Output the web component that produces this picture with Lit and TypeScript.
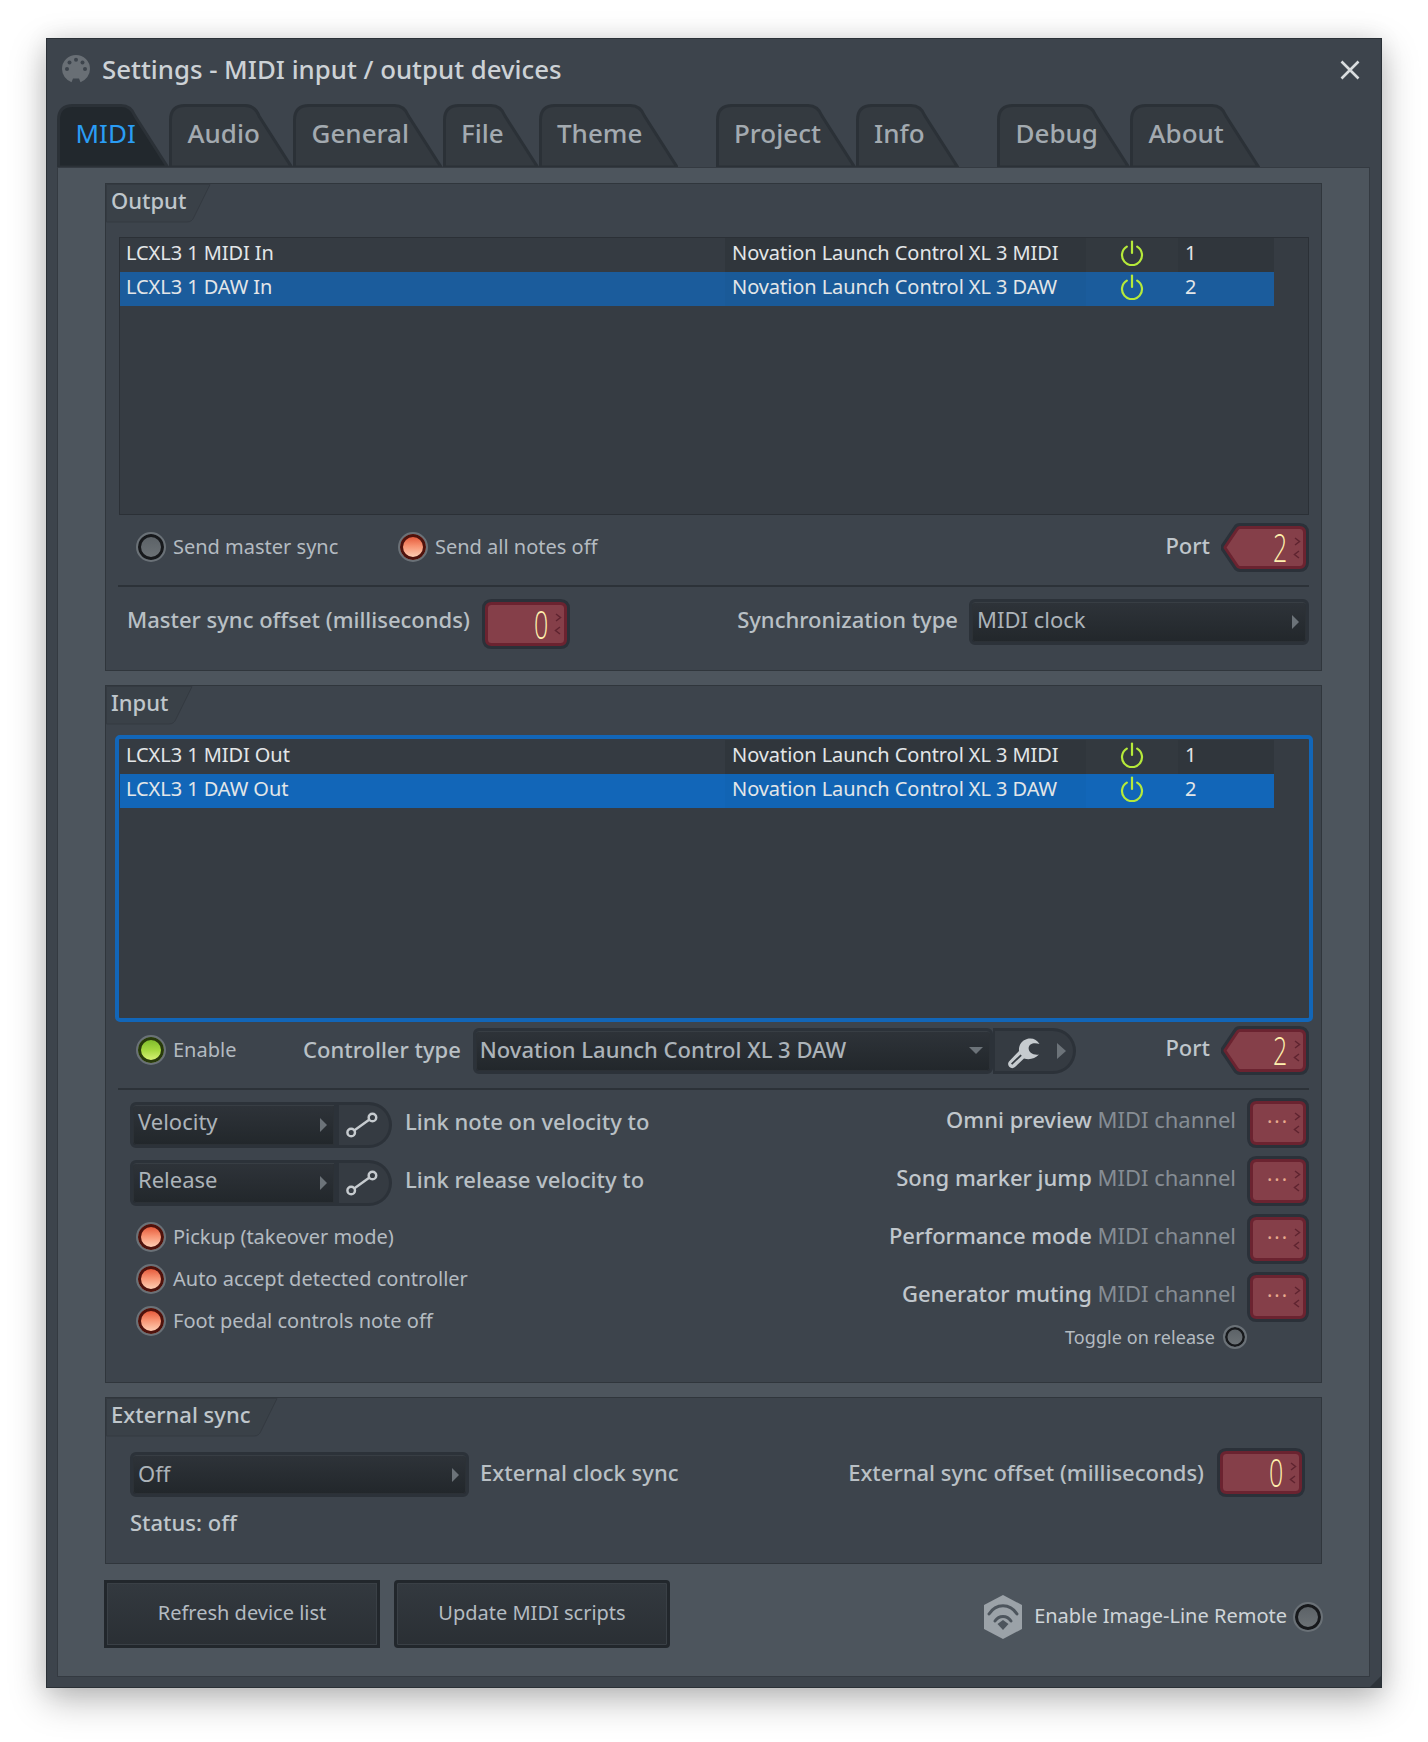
import { LitElement, html, css, svg } from "lit";
import { customElement } from "lit/decorators.js";

const tabPath = (w: number, h: number) =>
  `M1.5 ${h} V16 Q1.5 1.5 16 1.5 H${w - 48} Q${w - 38} 1.5 ${w - 34} 12 L${w - 1.5} ${h} Z`;

const groupPath = (w: number, h: number) =>
  `M0.5 0.5 H${w - 1} L${w - 17} ${h - 6} Q${w - 19} ${h - 1} ${w - 24} ${h - 1} H0.5 Z`;

function knobPath(w: number, h: number, pointed: boolean) {
  const i = 4.5;
  const r = 5;
  if (!pointed) {
    return `M${i + r} ${i} H${w - i - r} Q${w - i} ${i} ${w - i} ${i + r} V${h - i - r} Q${w - i} ${h - i} ${w - i - r} ${h - i} H${i + r} Q${i} ${h - i} ${i} ${h - i - r} V${i + r} Q${i} ${i} ${i + r} ${i} Z`;
  }
  const mid = h / 2;
  return `M19 ${i} H${w - i - r} Q${w - i} ${i} ${w - i} ${i + r} V${h - i - r} Q${w - i} ${h - i} ${w - i - r} ${h - i} H19 Q17 ${h - i} 16 ${h - i - 2} L4.5 ${mid + 1} Q3.5 ${mid} 4.5 ${mid - 1} L16 ${i + 2} Q17 ${i} 19 ${i} Z`;
}

const power = html`<svg class="power" width="24" height="26" viewBox="0 0 24 26" fill="none" stroke="#b6ea3a" stroke-width="2.2" stroke-linecap="round"><path d="M6.8 6.6 A10 10 0 1 0 17.2 6.6"/><path d="M12 1.5 V13"/></svg>`;

const linkIcon = html`<svg width="55" height="46" viewBox="0 0 55 46" fill="none" stroke="#c6cbcf" stroke-width="2.6"><circle cx="15" cy="31" r="4"/><circle cx="37.5" cy="15" r="4"/><path d="M18.5 28.5 L34 17.5"/></svg>`;

const wrench = html`<svg width="44" height="40" viewBox="0 0 44 40"><path fill="#c6cbcf" fill-rule="evenodd" d="M39.5 13 C37 8.5 32 6.5 27 8 C21.5 9.5 18.5 14.5 19 20 L9 30.5 C7.5 32.2 8 34.5 9.5 36 C11 37.5 13.5 37.5 15 36 L24 27.5 C29 29 35 28 39 23.5 C36 24 33 23.5 30.5 21.5 C28 19 28 15.5 30.5 13.5 C33 11.7 36.5 12 39.5 13 Z M20.5 23.5 L11 32.5 L12.2 33.8 L21.8 24.8 Z"/></svg>`;

const midiLogo = html`<svg width="40" height="40" viewBox="0 0 40 40"><path fill="#696f75" fill-rule="evenodd" d="M6 20 A14 14 0 0 1 34 20 A14 14 0 0 1 24.5 33.2 L23 29.5 H17 L15.5 33.2 A14 14 0 0 1 6 20 Z"/><g fill="#3d444c"><circle cx="13.5" cy="13.5" r="2"/><circle cx="20" cy="10.8" r="2"/><circle cx="26.5" cy="13.5" r="2"/><circle cx="11" cy="20" r="2"/><circle cx="29" cy="20" r="2"/></g></svg>`;

const remoteLogo = html`<svg width="38" height="44" viewBox="0 0 38 44"><path fill="#9ba2a8" d="M19 0 L38 10 V34 L19 44 L0 34 V10 Z"/><g fill="none" stroke="#4d555d" stroke-width="3" stroke-linecap="round"><path d="M5 19 C12 8 26 8 33 19"/><path d="M11 26 C15 20 23 20 27 26"/></g><path fill="#4d555d" d="M19 25 L24.5 29 L19 35 L13.5 29 Z"/></svg>`;

function combo(text: string, cls: string, arrow: "right" | "down" = "right") {
  return html`<div class="combo ${cls}"><span class="combo-text">${text}</span><span class="${arrow === "right" ? "arr-r" : "arr-d"}"></span></div>`;
}

function knob(val: string, w: number, h: number, pointed = false, dots = false) {
  return html`<div class="knob" style="width:${w}px;height:${h}px">
    <svg class="knob-bg" width="${w}" height="${h}" viewBox="0 0 ${w} ${h}" fill="none">
      ${svg`<path d=${knobPath(w, h, pointed)} stroke="#2b3139" stroke-width="9" stroke-linejoin="round"/>
      <path d=${knobPath(w, h, pointed)} fill="#853f49" stroke="#6b2330" stroke-width="3" stroke-linejoin="round"/>
      <path d="M${w - 14} 15 L${w - 9.5} 18.5 L${w - 14} 22" stroke="#5f2430" stroke-width="1.5"/>
      <path d="M${w - 10} 28 L${w - 14.5} 31.5 L${w - 10} 35" stroke="#5f2430" stroke-width="1.5"/>`}
    </svg>
    <span class="${dots ? "dots" : "digit"}">${val}</span>
  </div>`;
}

function radio(state: "off" | "red" | "green", small = false) {
  return html`<span class="radio ${state} ${small ? "small" : ""}"></span>`;
}

function tab(label: string, w: number, active = false) {
  const fill = active ? "#22282d" : "#343a40";
  return html`<div class="tab ${active ? "on" : ""}" style="width:${w}px">
    <svg width="${w}" height="63" viewBox="0 0 ${w} 63"><path d=${tabPath(w, 63)} fill=${fill} stroke="#2b3137" stroke-width="3"/></svg>
    <span>${label}</span>
  </div>`;
}

@customElement("app-root")
export class AppRoot extends LitElement {
  static styles = css`
    :host {
      display: block; background: #fff; padding: 38px 46px 54px;
      font: 500 22px/30px "Noto Sans", sans-serif; color: #b9c0c5;
      box-sizing: border-box;
    }
    .win {
      width: 1336px; height: 1650px; box-sizing: border-box; background: #3d444c;
      border: 1px solid #2a3036; box-shadow: 0 12px 34px rgba(0,0,0,.28), 0 0 22px rgba(0,0,0,.08);
      display: flex; flex-direction: column; position: relative;
    }
    .title { height: 65px; box-sizing: border-box; display: flex; align-items: center; padding: 0 0 5px 9px; }
    .title-text { font-size: 25.8px; color: #cdd2d6; margin-left: 6px; }
    .close { margin: 2px 19px 0 auto; width: 24px; height: 24px; }
    .tabs { display: flex; height: 63px; padding-left: 10px; position: relative; z-index: 1; }
    .tabs .sp { width: 38.5px; flex: none; }
    .tabs .sp.a { width: 37.5px; }
    .tab { flex: none; position: relative; height: 63px; }
    .tab svg { position: absolute; left: 0; top: 0; }
    .tab span {
      position: relative; display: block; padding: 6px 0 0 18.5px;
      font-size: 26px; line-height: 46px; color: #a3aab0;
    }
    .tab.on span { color: #2a9df4; font-weight: 400; }
    .panel {
      flex: 1; margin: 0 11px 10px 10px; background: #4d555d; border: 1px solid #343a41;
      padding: 15px 47px 0; display: flex; flex-direction: column;
    }
    .group { background: #3d444c; border: 1px solid #30363c; box-sizing: border-box; flex: none; }
    .g-out { height: 488px; }
    .g-in { height: 698px; margin-top: 14px; }
    .g-ext { height: 167px; margin-top: 14px; }
    .ghead { position: relative; height: 39px; }
    .ghead svg { position: absolute; left: 0; top: 0; }
    .ghead span { position: relative; display: block; padding-left: 5px; line-height: 32px; color: #bfc6cb; }
    .inner { padding: 0 12px 0 13px; }

    .list { background: #363c43; border: 1px solid #2b3036; box-sizing: border-box; }
    .l-out { margin: 14px 0 0; height: 278px; }
    .l-in { margin: 10px -4px 0; height: 287px; border: 4px solid #1266b8; border-radius: 5px; padding: 1px 0 0 1px; }
    .row {
      display: grid; grid-template-columns: 605px 361px 92px 96px; width: 1154px; height: 34px;
      font-weight: 400; font-size: 20px; line-height: 30px; letter-spacing: -0.07px; color: #e3e6e8;
    }
    .row > div { white-space: nowrap; }
    .c1 { padding-left: 6px; background: #353b42; }
    .c2 { padding-left: 7px; background: #30363c; }
    .c3 { display: flex; justify-content: center; align-items: center; background: #33393f; }
    .c4 { padding-left: 7px; background: #30363c; }
    .sel.out { background: #1b5c9c; }
    .sel.in { background: #1266b8; }
    .sel .c1 { background: transparent; }
    .sel .c2 { background: rgba(0,0,0,.02); }
    .sel .c3, .sel .c4 { background: transparent; }
    .power { position: relative; top: -2px; }

    .flexrow { display: flex; align-items: center; }
    .push { margin-left: auto; }
    .opt { display: flex; align-items: center; gap: 7px; font-size: 20px; font-weight: 400; color: #b4bbc1; }
    .radio {
      width: 30px; height: 30px; box-sizing: border-box; border-radius: 50%; flex: none; display: block;
      border: 2px solid #6a7177; position: relative;
      box-shadow: inset 0 0 0 3px #17191c; background: linear-gradient(#5a6065, #6e7478);
      background-clip: padding-box;
    }
    .radio.small { width: 24px; height: 24px; box-shadow: inset 0 0 0 2.5px #17191c; }
    .radio.red {
      box-shadow: inset 0 0 0 3px #4f120c;
      background: linear-gradient(#e4593a 10%, #f7906f 45%, #ffd0b6 90%);
      background-clip: padding-box;
    }
    .radio.green {
      box-shadow: inset 0 0 0 3px #28390c;
      background: linear-gradient(#7fbb2c 10%, #a5d83f 50%, #d8f377 90%);
      background-clip: padding-box;
    }
    .r-opts { margin-top: 8px; padding-left: 17px; height: 49px; }
    .r-opts .opt { width: 262px; position: relative; top: -1px; }
    .portl { color: #bfc6cb; margin-right: 11px; position: relative; top: -3px; }
    .in-top .portl { top: -4px; }
    .sep { height: 2px; background: #2c3238; margin: 13px 0 0 -1px; }
    .sync-row { margin-top: 12px; padding-left: 8px; height: 50px; align-items: flex-start; }
    .sync-row .lbl, .sync-row .lbl2 { line-height: 40px; }
    .sync-row .lbl2 { margin-left: auto; margin-right: 11px; }
    .lbl { margin-right: 12px; }

    .knob { position: relative; flex: none; display: flex; justify-content: flex-end; align-items: center; padding-right: 22px; box-sizing: border-box; }
    .knob-bg { position: absolute; left: 0; top: 0; }
    .digit {
      position: relative; font: 300 39px/39px "Open Sans", sans-serif; color: #fff0ae;
      display: inline-block; transform: scaleX(.64); transform-origin: right center; margin-top: -2px;
    }
    .dots { position: relative; font: 400 20px/20px "Noto Sans", sans-serif; color: #e8ab8e; letter-spacing: 2px; margin-right: -2px; top: -1px; }

    .combo {
      box-sizing: border-box; height: 46px; border: 3px solid #2c3239; border-radius: 6px; flex: none;
      background: linear-gradient(#2e3339, #22272b); box-shadow: inset 0 1px 0 #383e44, inset 0 0 0 1px #2c3136;
      display: flex; align-items: center; padding: 0 7px 0 5px; color: #acb3b9; font-size: 22px; font-weight: 400;
    }
    .combo-text { position: relative; top: -4px; white-space: nowrap; }
    .arr-r { margin-left: auto; width: 0; height: 0; border-left: 7px solid #6c7379; border-top: 7px solid transparent; border-bottom: 7px solid transparent; }
    .arr-d { margin-left: auto; width: 0; height: 0; border-top: 7px solid #6c7379; border-left: 7px solid transparent; border-right: 7px solid transparent; }
    .combo.mid { width: 340px; }
    .combo.mid .combo-text { top: -3px; }
    .combo.ct { width: 520px; padding-left: 4px; font-weight: 500; }
    .combo.ct .combo-text { top: -2px; }
    .combo.sm { width: 207px; border-radius: 6px 0 0 6px; }
    .combo.off { width: 339px; height: 45px; align-self: flex-end; }
    .combo.off .combo-text { top: -2px; }
    .ibtn {
      flex: none; height: 46px; box-sizing: border-box; border: 3px solid #2c3239; border-left-width: 2px;
      border-radius: 0 23px 23px 0; background: #353b42; display: flex; align-items: center; position: relative;
    }
    .ibtn svg { display: block; margin: -3px 0 -3px -2px; }
    .ibtn.wr { width: 83px; padding-left: 5px; gap: 13px; }
    .ibtn.wr svg { margin: 0; }
    .ibtn.wr .arr-r { margin: 0; border-left-width: 9px; border-top-width: 8px; border-bottom-width: 8px; }
    .ibtn.lk { width: 55px; }

    .in-top { margin-top: 4px; height: 49px; padding-left: 17px; }
    .in-top .opt { width: 167px; position: relative; top: -1px; }
    .in-top .lbl { margin-right: 12px; position: relative; top: -2px; }

    .lower { display: flex; margin-top: 8px; }
    .left { padding-left: 11px; padding-top: 4px; flex: 1; }
    .vrow { display: flex; align-items: center; height: 46px; margin-bottom: 12px; }
    .vrow:nth-child(2) { margin-bottom: 10px; }
    .vrow .t { margin-left: 13px; position: relative; top: -4px; }
    .left .opt { height: 42px; margin-left: 6px; }
    .right { width: 640px; display: flex; flex-direction: column; align-items: flex-end; gap: 8px; }
    .chan { display: flex; align-items: center; justify-content: flex-end; height: 50px; gap: 11px; }
    .chan .tx { position: relative; top: -4px; color: #c1c7cc; white-space: nowrap; }
    .chan .dim { color: #868d94; font-weight: 400; }
    .toggle { display: flex; align-items: center; gap: 8px; font-size: 18px; font-weight: 400; letter-spacing: .07px; color: #b4bbc1; margin-right: 62px; margin-top: -5px; height: 24px; }

    .ext { padding: 11px 16px 0 24px; }
    .ext-row { height: 49px; }
    .ext-row .t { margin-left: 11px; position: relative; top: -1px; }
    .ext-row .o { margin-right: 13px; position: relative; top: -1px; }
    .status { margin-top: 10px; color: #bfc6cb; }

    .foot { display: flex; align-items: center; margin: 16px -1px 0 -1px; height: 68px; }
    .btn {
      box-sizing: border-box; width: 276px; height: 68px; flex: none; border: 3px solid #22272c; padding: 0 0 3px;
      background: linear-gradient(#33393f, #2a2f34); box-shadow: inset 0 0 0 1px #3a4046;
      display: flex; align-items: center; justify-content: center;
      font: 400 20px/30px "Noto Sans", sans-serif; color: #b4bbc1;
    }
    .btn + .btn { margin-left: 14px; border-radius: 4px; }
    .remote { margin-left: auto; display: flex; align-items: center; margin-top: 5px; }
    .remote .nm { font-size: 20px; font-weight: 400; color: #d0d5d9; margin: 0 6px 0 12px; white-space: nowrap; position: relative; top: -1px; }
    .grip { position: absolute; right: 0; bottom: 0; width: 0; height: 0; border-left: 11px solid transparent; border-bottom: 11px solid #2d3339; }
  `;

  private rows(a: string, b: string, c: string, d: string, cls: string) {
    const r = (n: string, desc: string, p: string, sel: string) => html`<div class="row ${sel}">
      <div class="c1">${n}</div><div class="c2">${desc}</div><div class="c3">${power}</div><div class="c4">${p}</div>
    </div>`;
    return html`${r(a, b, "1", "")}${r(c, d, "2", "sel " + cls)}`;
  }

  private head(name: string, w: number) {
    return html`<div class="ghead"><svg width="${w}" height="39" viewBox="0 0 ${w} 39">
      <path d=${groupPath(w, 39)} fill="#3a4148" stroke="#343a41"/></svg><span>${name}</span></div>`;
  }

  private chan(a: string) {
    return html`<div class="chan"><span class="tx">${a} <span class="dim">MIDI channel</span></span>${knob("···", 62, 50, false, true)}</div>`;
  }

  render() {
    return html`<div class="win">
      <div class="title">
        ${midiLogo}
        <span class="title-text">Settings - MIDI input / output devices</span>
        <svg class="close" viewBox="0 0 24 24" fill="none" stroke="#d9dcde" stroke-width="2.6"><path d="M3.5 3.5 L20.5 20.5 M20.5 3.5 L3.5 20.5"/></svg>
      </div>
      <div class="tabs">
        ${tab("MIDI", 112, true)}
        ${tab("Audio", 124)}
        ${tab("General", 149.5)}
        ${tab("File", 96)}
        ${tab("Theme", 139.5)}
        <div class="sp a"></div>
        ${tab("Project", 140)}
        ${tab("Info", 103)}
        <div class="sp"></div>
        ${tab("Debug", 133)}
        ${tab("About", 130)}
      </div>
      <div class="panel">
        <section class="group g-out">
          ${this.head("Output", 105)}
          <div class="inner">
            <div class="list l-out">${this.rows("LCXL3 1 MIDI In", "Novation Launch Control XL 3 MIDI", "LCXL3 1 DAW In", "Novation Launch Control XL 3 DAW", "out")}</div>
            <div class="flexrow r-opts">
              <label class="opt">${radio("off")}Send master sync</label>
              <label class="opt">${radio("red")}Send all notes off</label>
              <span class="portl push">Port</span>${knob("2", 88, 49, true)}
            </div>
            <div class="sep"></div>
            <div class="flexrow sync-row">
              <span class="lbl">Master sync offset (milliseconds)</span>${knob("0", 88, 50)}
              <span class="lbl2">Synchronization type</span>${combo("MIDI clock", "mid")}
            </div>
          </div>
        </section>

        <section class="group g-in">
          ${this.head("Input", 87)}
          <div class="inner">
            <div class="list l-in">${this.rows("LCXL3 1 MIDI Out", "Novation Launch Control XL 3 MIDI", "LCXL3 1 DAW Out", "Novation Launch Control XL 3 DAW", "in")}</div>
            <div class="flexrow in-top">
              <label class="opt">${radio("green")}Enable</label>
              <span class="lbl">Controller type</span>
              ${combo("Novation Launch Control XL 3 DAW", "ct", "down")}
              <div class="ibtn wr">${wrench}<span class="arr-r"></span></div>
              <span class="portl push">Port</span>${knob("2", 88, 49, true)}
            </div>
            <div class="sep"></div>
            <div class="lower">
              <div class="left">
                <div class="vrow">${combo("Velocity", "sm")}<div class="ibtn lk">${linkIcon}</div><span class="t">Link note on velocity to</span></div>
                <div class="vrow">${combo("Release", "sm")}<div class="ibtn lk">${linkIcon}</div><span class="t">Link release velocity to</span></div>
                <label class="opt">${radio("red")}Pickup (takeover mode)</label>
                <label class="opt">${radio("red")}Auto accept detected controller</label>
                <label class="opt">${radio("red")}Foot pedal controls note off</label>
              </div>
              <div class="right">
                ${this.chan("Omni preview")}
                ${this.chan("Song marker jump")}
                ${this.chan("Performance mode")}
                ${this.chan("Generator muting")}
                <label class="toggle">Toggle on release ${radio("off", true)}</label>
              </div>
            </div>
          </div>
        </section>

        <section class="group g-ext">
          ${this.head("External sync", 172)}
          <div class="ext">
            <div class="flexrow ext-row">
              ${combo("Off", "off")}<span class="t">External clock sync</span>
              <span class="o push">External sync offset (milliseconds)</span>${knob("0", 88, 49)}
            </div>
            <div class="status">Status: off</div>
          </div>
        </section>

        <div class="foot">
          <button class="btn">Refresh device list</button>
          <button class="btn">Update MIDI scripts</button>
          <div class="remote">${remoteLogo}<span class="nm">Enable Image-Line Remote</span>${radio("off")}</div>
        </div>
      </div>
      <div class="grip"></div>
    </div>`;
  }
}
